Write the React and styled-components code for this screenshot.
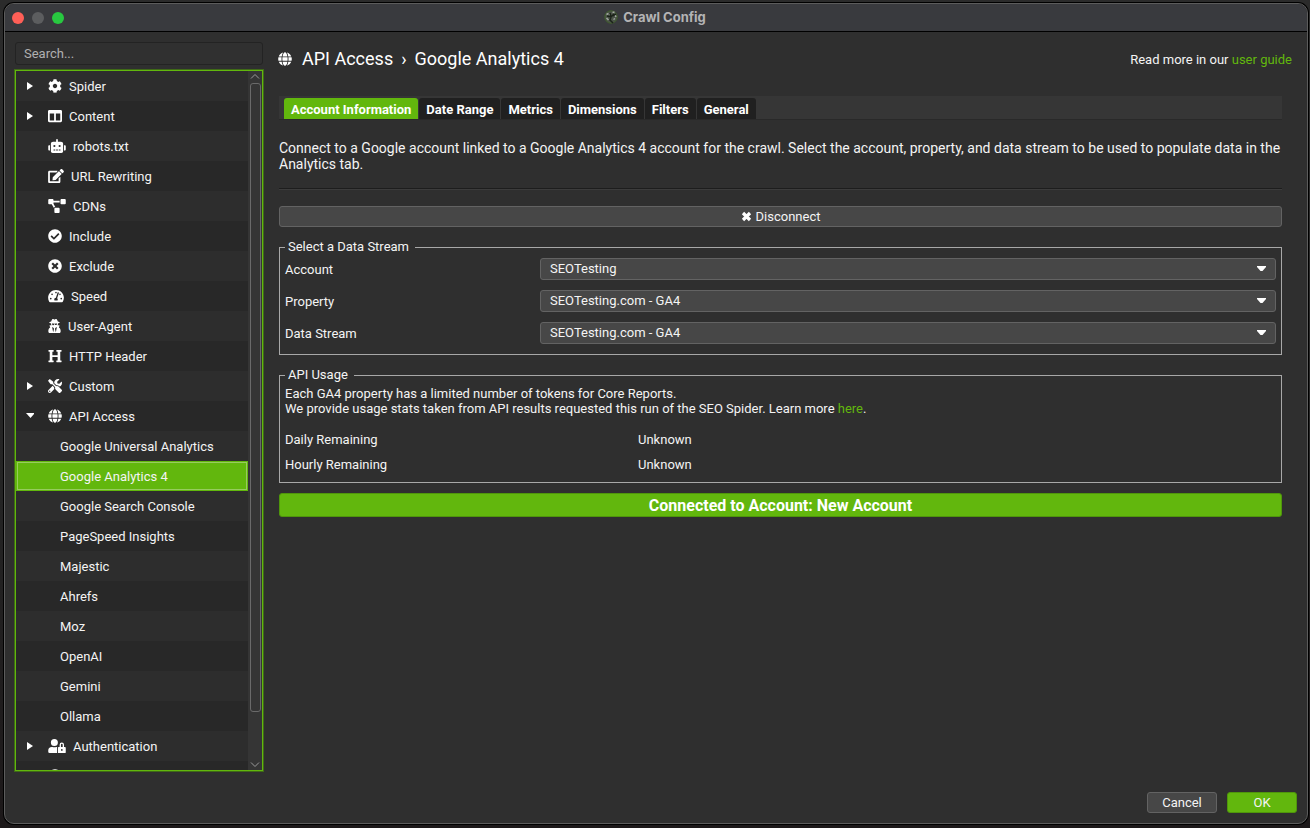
import React from "react";
import styled, { createGlobalStyle } from "styled-components";
import {
  FaCheckCircle,
  FaClock,
  FaCog,
  FaColumns,
  FaEdit,
  FaGlobe,
  FaHeading,
  FaProjectDiagram,
  FaRobot,
  FaTachometerAlt,
  FaTimesCircle,
  FaTools,
  FaUserLock,
  FaUserSecret,
} from "react-icons/fa";

const GlobalStyle = createGlobalStyle`
  * {
    box-sizing: border-box;
  }

  body {
    margin: 0;
    background: linear-gradient(#2b2b2b, #242424 60%, #1c1819);
    color: #f4f4f4;
    font-family: Roboto, "Liberation Sans", sans-serif;
    font-size: 13px;
    line-height: 16px;
  }

  button, input, select {
    font: inherit;
    color: inherit;
  }

  a {
    color: #62b70d;
    text-decoration: none;
  }
`;

const Page = styled.div`
  height: 100vh;
  padding: 3px 2px 4px 4px;
`;

const Window = styled.div`
  height: 100%;
  display: flex;
  flex-direction: column;
  overflow: hidden;
  border: 1px solid #5c5c5c;
  border-radius: 10px;
  box-shadow: 0 0 0 1px #000;
  background: #2f2f2f;
`;

const TitleBar = styled.header`
  flex: none;
  height: 28px;
  display: grid;
  grid-template-columns: 1fr auto 1fr;
  align-items: center;
  background: #393a3e;
  border-bottom: 1px solid #000;
`;

const Lights = styled.div`
  display: flex;
  gap: 8px;
  padding-left: 7px;
`;

const Light = styled.button`
  width: 12px;
  height: 12px;
  padding: 0;
  border: none;
  border-radius: 50%;
  background: ${(props) => props.$color};
`;

const WindowTitle = styled.h1`
  display: flex;
  align-items: center;
  gap: 5px;
  margin: 0;
  padding: 0 2px 2px 0;
  font-family: Inter, Roboto, sans-serif;
  font-size: 13px;
  font-weight: 700;
  color: #b4b4b5;
`;

const Body = styled.div`
  flex: 1;
  min-height: 0;
  display: flex;
  gap: 14px;
  padding: 10px 14px 0 9px;
`;

const Sidebar = styled.aside`
  flex: none;
  width: 250px;
  display: flex;
  flex-direction: column;
  gap: 4px;
`;

const Search = styled.input`
  height: 23px;
  margin: 0 1px;
  padding: 0 8px;
  border: 1px solid #232323;
  border-radius: 3px;
  background: #303030;
  outline: none;

  &::placeholder {
    color: #b0b0b0;
    opacity: 1;
  }
`;

const TreeFrame = styled.div`
  flex: 1;
  min-height: 0;
  display: flex;
  border: 2px solid #62b70d;
  outline: 1px solid #3f6a17;
  outline-offset: -1px;
`;

const Tree = styled.ul`
  flex: 1;
  margin: 0;
  padding: 0;
  list-style: none;
  overflow: hidden;
`;

const TreeItem = styled.li`
  height: 30px;
  display: flex;
  align-items: center;
  padding-left: ${(props) => (props.$child ? "44px" : "10px")};
  background: ${(props) => (props.$even ? "#282828" : "#2d2d2d")};

  ${(props) =>
    props.$selected &&
    `
    background: #62b70d;
    border: 1px solid #62b70d;
    padding-left: 43px;
    box-shadow: inset 0 0 0 1px #97cc5e;
  `}
`;

const ItemLabel = styled.span`
  padding-top: 2px;
`;

const Arrow = styled.svg`
  flex: none;
  width: 8px;
  height: 10px;
  margin-right: 14px;
  fill: #fff;
`;

const ItemIcon = styled.span`
  display: flex;
  margin-right: 7px;
  color: #fff;

  svg {
    width: ${(props) => props.$width}px;
    height: 14px;
  }
`;

const ScrollBar = styled.div`
  flex: none;
  width: 14px;
  display: flex;
  flex-direction: column;
  align-items: center;
  justify-content: space-between;
  background: #353535;
`;

const ScrollArrow = styled.svg`
  flex: none;
  width: 10px;
  height: 12px;
  fill: none;
  stroke: #9a9a9a;
`;

const ScrollTrack = styled.div`
  flex: 1;
  width: 11px;
  padding-bottom: 46px;
`;

const ScrollThumb = styled.div`
  height: 100%;
  border: 1px solid #6a6a6a;
  border-radius: 3px;
`;

const Main = styled.main`
  flex: 1;
  min-width: 0;
`;

const Heading = styled.div`
  display: flex;
  align-items: center;
  justify-content: space-between;
  height: 34px;
`;

const Crumbs = styled.h2`
  display: flex;
  align-items: center;
  gap: 8px;
  margin: 0;
  font-size: 18px;
  line-height: 24px;
  font-weight: 400;
  color: #fff;

  svg {
    width: 14px;
    height: 14px;
    margin-right: 2px;
  }
`;

const Guide = styled.span`
  padding: 2px 1px 0 0;
`;

const Content = styled.div`
  padding: 0 11px 0 1px;
  margin-top: 20px;
`;

const Tabs = styled.div`
  display: flex;
  gap: 1px;
  height: 24px;
  padding: 2px 5px 0;
  background: #363636;
  border-bottom: 1px solid #292929;
`;

const Tab = styled.button`
  padding: 2px 7px 0;
  border: none;
  border-radius: 3px 3px 0 0;
  background: ${(props) => (props.$active ? "#62b70d" : "#202020")};
  color: #fff;
  font-weight: 700;
`;

const Intro = styled.p`
  margin: 0;
  padding: 20px 0 16px;
  border-bottom: 1px solid #1d1d1d;
  box-shadow: 0 1px #3c3c3c;
  font-size: 14px;
`;

const Button = styled.button`
  display: flex;
  align-items: center;
  justify-content: center;
  gap: 4px;
  width: ${(props) => props.$width || "100%"};
  height: 21px;
  padding: 0;
  border: 1px solid ${(props) => (props.$primary ? "#4f960b" : "#636363")};
  border-radius: 3px;
  background: ${(props) => (props.$primary ? "#62b70d" : "#474747")};
`;

const Stack = styled.div`
  display: flex;
  flex-direction: column;
  gap: 10px;
  padding-top: 17px;
`;

const Group = styled.fieldset`
  min-width: 0;
  margin: 2px 0 0;
  padding: 3px 5px 10px;
  border: 1px solid #a8a8a8;
`;

const Legend = styled.legend`
  padding: 0 6px 0 3px;
`;

const Field = styled.div`
  display: grid;
  grid-template-columns: 255px 1fr;
  align-items: center;
  height: 22px;
  margin-bottom: 10px;

  &:last-child {
    margin-bottom: 0;
  }
`;

const FieldLabel = styled.label`
  padding-top: 2px;
`;

const SelectBox = styled.select`
  appearance: none;
  width: 100%;
  height: 22px;
  padding: 0 24px 0 9px;
  border: 1px solid #636363;
  border-radius: 3px;
  background: #474747
    url("data:image/svg+xml,%3Csvg xmlns='http://www.w3.org/2000/svg' width='9' height='5'%3E%3Cpath d='M0 0h9v1L5.5 5h-2L0 1z' fill='white'/%3E%3C/svg%3E")
    no-repeat right 9px top 7px;
`;

const UsageText = styled.p`
  margin: 0 0 16px;
  line-height: 15px;
`;

const Usage = styled.dl`
  display: grid;
  grid-template-columns: 353px 1fr;
  row-gap: 10px;
  margin: 0;
  line-height: 15px;

  dd {
    margin: 0;
  }
`;

const Status = styled.div`
  height: 24px;
  border: 1px solid #4f960b;
  border-radius: 3px;
  background: #62b70d;
  color: #fff;
  font-size: 16px;
  line-height: 24px;
  font-weight: 700;
  text-align: center;
`;

const Footer = styled.footer`
  flex: none;
  display: flex;
  justify-content: flex-end;
  gap: 10px;
  padding: 20px 10px 10px;
`;

const items = [
  { label: "Spider", icon: FaCog, arrow: "right" },
  { label: "Content", icon: FaColumns, arrow: "right" },
  { label: "robots.txt", icon: FaRobot, width: 18 },
  { label: "URL Rewriting", icon: FaEdit, width: 16 },
  { label: "CDNs", icon: FaProjectDiagram, width: 18 },
  { label: "Include", icon: FaCheckCircle },
  { label: "Exclude", icon: FaTimesCircle },
  { label: "Speed", icon: FaTachometerAlt, width: 16 },
  { label: "User-Agent", icon: FaUserSecret, width: 13 },
  { label: "HTTP Header", icon: FaHeading },
  { label: "Custom", icon: FaTools, arrow: "right" },
  { label: "API Access", icon: FaGlobe, arrow: "down" },
  { label: "Google Universal Analytics" },
  { label: "Google Analytics 4", selected: true },
  { label: "Google Search Console" },
  { label: "PageSpeed Insights" },
  { label: "Majestic" },
  { label: "Ahrefs" },
  { label: "Moz" },
  { label: "OpenAI" },
  { label: "Gemini" },
  { label: "Ollama" },
  { label: "Authentication", icon: FaUserLock, arrow: "right", width: 18 },
  { label: "", icon: FaClock },
];

const arrows = {
  right: "M1 1L7 5L1 9z",
  down: "M0 2H9L4.5 7z",
};

const tabs = [
  "Account Information",
  "Date Range",
  "Metrics",
  "Dimensions",
  "Filters",
  "General",
];

const fields = [
  { id: "account", label: "Account", value: "SEOTesting" },
  { id: "property", label: "Property", value: "SEOTesting.com - GA4" },
  { id: "stream", label: "Data Stream", value: "SEOTesting.com - GA4" },
];

const Logo = () => (
  <svg width="14" height="14" viewBox="0 0 14 14">
    <circle cx="7" cy="7" r="6.2" fill="#4b5349" stroke="#41602c" />
    <path
      d="M2.5 4.5l2-1M8.5 2.5l2-.5M11 5l1 2M2.5 8l2 2M9.5 9.5l1.5-1M5.5 5l1-1"
      stroke="#a3a8a3"
      strokeWidth="1.5"
      fill="none"
    />
    <path
      d="M3 6l4 1l3-3M6 3l1 4l-1 3l3 3M12 4l-3 2"
      stroke="#1b2319"
      strokeWidth="1.5"
      fill="none"
    />
  </svg>
);

const CrossIcon = () => (
  <svg width="11" height="11" viewBox="0 0 11 11">
    <path d="M2 2L9 9M9 2L2 9" stroke="#fff" strokeWidth="3.2" />
  </svg>
);

const App = () => {
  return (
    <Page>
      <GlobalStyle />
      <Window>
        <TitleBar>
          <Lights>
            <Light $color="#ff5f57" aria-label="Close" />
            <Light $color="#5c5d5f" aria-label="Minimize" />
            <Light $color="#28c840" aria-label="Zoom" />
          </Lights>
          <WindowTitle>
            <Logo />
            Crawl Config
          </WindowTitle>
        </TitleBar>

        <Body>
          <Sidebar>
            <Search placeholder="Search..." aria-label="Search" />
            <TreeFrame>
              <Tree>
                {items.map(
                  ({ label, icon: Icon, arrow, selected, width = 14 }, i) => (
                    <TreeItem
                      key={i}
                      $even={i % 2 === 1}
                      $child={!Icon}
                      $selected={selected}
                    >
                      {Icon && (
                        <>
                          <Arrow viewBox="0 0 8 10">
                            {arrow && <path d={arrows[arrow]} />}
                          </Arrow>
                          <ItemIcon $width={width}>
                            <Icon />
                          </ItemIcon>
                        </>
                      )}
                      <ItemLabel>{label}</ItemLabel>
                    </TreeItem>
                  )
                )}
              </Tree>
              <ScrollBar>
                <ScrollArrow viewBox="0 0 10 12">
                  <path d="M1 7.5L5 3.5L9 7.5" />
                </ScrollArrow>
                <ScrollTrack>
                  <ScrollThumb />
                </ScrollTrack>
                <ScrollArrow viewBox="0 0 10 12">
                  <path d="M1 4.5L5 8.5L9 4.5" />
                </ScrollArrow>
              </ScrollBar>
            </TreeFrame>
          </Sidebar>

          <Main>
            <Heading>
              <Crumbs>
                <FaGlobe />
                <span>API Access</span>
                <span>›</span>
                <span>Google Analytics 4</span>
              </Crumbs>
              <Guide>
                Read more in our <a href="#guide">user guide</a>
              </Guide>
            </Heading>

            <Content>
              <Tabs>
                {tabs.map((tab, i) => (
                  <Tab key={tab} $active={i === 0}>
                    {tab}
                  </Tab>
                ))}
              </Tabs>
              <Intro>
                Connect to a Google account linked to a Google Analytics 4
                account for the crawl. Select the account, property, and data
                stream to be used to populate data in the Analytics tab.
              </Intro>

              <Stack>
                <Button>
                  <CrossIcon />
                  Disconnect
                </Button>

                <Group>
                  <Legend>Select a Data Stream</Legend>
                  {fields.map((field) => (
                    <Field key={field.id}>
                      <FieldLabel htmlFor={field.id}>{field.label}</FieldLabel>
                      <SelectBox id={field.id}>
                        <option>{field.value}</option>
                      </SelectBox>
                    </Field>
                  ))}
                </Group>

                <Group>
                  <Legend>API Usage</Legend>
                  <UsageText>
                    Each GA4 property has a limited number of tokens for Core
                    Reports.
                    <br />
                    We provide usage stats taken from API results requested this
                    run of the SEO Spider. Learn more <a href="#usage">here</a>.
                  </UsageText>
                  <Usage>
                    <dt>Daily Remaining</dt>
                    <dd>Unknown</dd>
                    <dt>Hourly Remaining</dt>
                    <dd>Unknown</dd>
                  </Usage>
                </Group>

                <Status>Connected to Account: New Account</Status>
              </Stack>
            </Content>
          </Main>
        </Body>

        <Footer>
          <Button $width="70px">Cancel</Button>
          <Button $width="70px" $primary>
            OK
          </Button>
        </Footer>
      </Window>
    </Page>
  );
};

export default App;
